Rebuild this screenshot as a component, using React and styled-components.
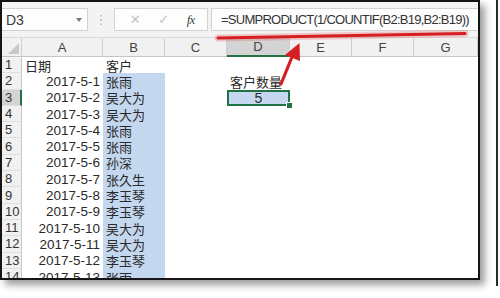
import React from 'react';
import styled, { createGlobalStyle } from 'styled-components';

const GlobalStyle = createGlobalStyle`
  html, body { margin: 0; padding: 0; background: #fff; }
  body { font-family: "Liberation Sans", "Noto Sans CJK SC", sans-serif; }
`;

const rows = [
  ['日期', '客户'],
  ['2017-5-1', '张雨'],
  ['2017-5-2', '吴大为'],
  ['2017-5-3', '吴大为'],
  ['2017-5-4', '张雨'],
  ['2017-5-5', '张雨'],
  ['2017-5-6', '孙深'],
  ['2017-5-7', '张久生'],
  ['2017-5-8', '李玉琴'],
  ['2017-5-9', '李玉琴'],
  ['2017-5-10', '吴大为'],
  ['2017-5-11', '吴大为'],
  ['2017-5-12', '李玉琴'],
  ['2017-5-13', '张雨'],
];

const cols = ['A', 'B', 'C', 'D', 'E', 'F', 'G'];

function App() {
  return (
    <Page>
      <GlobalStyle />
      <Frame>
        <Panel>
          <Toolbar>
            <NameBox>
              D3
              <Caret />
            </NameBox>
            <Dots>⋮</Dots>
            <BtnBox>
              <Glyph>✕</Glyph>
              <Glyph>✓</Glyph>
              <Fx>fx</Fx>
            </BtnBox>
            <FormulaBox>=SUMPRODUCT(1/COUNTIF(B2:B19,B2:B19))</FormulaBox>
          </Toolbar>
          <Sheet>
            <Corner>
              <Tri />
            </Corner>
            {cols.map((c) => (
              <ColHead key={c} $active={c === 'D'}>
                {c}
              </ColHead>
            ))}
            {rows.map((r, i) => {
              const n = i + 1;
              return (
                <React.Fragment key={n}>
                  <RowHead $active={n === 3}>{n}</RowHead>
                  <Cell $right={n > 1} $cjk={n === 1}>
                    {r[0]}
                  </Cell>
                  <Cell $cjk $fill={n > 1}>
                    {r[1]}
                  </Cell>
                  <Cell />
                  {n === 2 && <Cell $cjk>客户数量</Cell>}
                  {n === 3 && (
                    <Selected>
                      5
                      <Handle />
                    </Selected>
                  )}
                  {n !== 2 && n !== 3 && <Cell />}
                  <Cell />
                  <Cell />
                  <Cell />
                </React.Fragment>
              );
            })}
          </Sheet>
        </Panel>
      </Frame>
      <Marks width="500" height="298" viewBox="0 0 500 298">
        <line x1="218" y1="38" x2="465" y2="33.5" stroke="rgba(225,70,70,0.25)" strokeWidth="7" strokeLinecap="round" />
        <line x1="218" y1="38" x2="465" y2="33.5" stroke="#d61f22" strokeWidth="3" strokeLinecap="round" />
        <line x1="281" y1="84" x2="292" y2="57" stroke="#d61f22" strokeWidth="3.2" strokeLinecap="round" />
        <polygon points="299.5,43 300,61 285,55" fill="#d61f22" />
      </Marks>
    </Page>
  );
}

const Page = styled.div`
  position: relative;
  width: 500px;
  height: 298px;
  overflow: hidden;
  background: #fff;
`;

const Frame = styled.div`
  width: 496px;
  height: 286px;
  border-right: 2px solid #2b2b2b;
`;

const Panel = styled.div`
  width: 476px;
  height: 276px;
  border: 2px solid #151515;
  box-shadow: 5px 5px 7px rgba(0, 0, 0, 0.38);
  background: #fff;
  overflow: hidden;
  display: flex;
  flex-direction: column;
`;

const Toolbar = styled.div`
  height: 36px;
  flex: none;
  display: flex;
  align-items: center;
  background: #f3f3f3;
  border-bottom: 1px solid #dadada;
  box-sizing: border-box;
`;

const NameBox = styled.div`
  width: 86px;
  height: 23px;
  box-sizing: border-box;
  background: #fdfdfd;
  border: 1px solid #d2d2d2;
  border-left: none;
  display: flex;
  align-items: center;
  justify-content: space-between;
  padding: 0 5px 0 4px;
  font-size: 14px;
  color: #3a3a3a;
`;

const Caret = styled.span`
  width: 0;
  height: 0;
  border-left: 3.5px solid transparent;
  border-right: 3.5px solid transparent;
  border-top: 4px solid #777;
`;

const Dots = styled.div`
  width: 26px;
  text-align: center;
  color: #b8b8b8;
  font-size: 13px;
  font-family: "DejaVu Sans", sans-serif;
`;

const BtnBox = styled.div`
  width: 94px;
  height: 23px;
  box-sizing: border-box;
  background: #fdfdfd;
  border: 1px solid #d2d2d2;
  display: flex;
  align-items: center;
  justify-content: space-around;
  padding: 0 4px 0 6px;
  margin-right: 3px;
`;

const Glyph = styled.span`
  font-family: "DejaVu Sans", sans-serif;
  font-size: 13px;
  color: #c2c2c2;
`;

const Fx = styled.span`
  font-family: "Liberation Serif", serif;
  font-style: italic;
  font-size: 13px;
  color: #444;
  letter-spacing: -1px;
`;

const FormulaBox = styled.div`
  flex: 1;
  height: 23px;
  box-sizing: border-box;
  background: #fdfdfd;
  border: 1px solid #d2d2d2;
  border-right: none;
  padding-left: 9px;
  display: flex;
  align-items: center;
  font-size: 13px;
  letter-spacing: -0.75px;
  color: #333;
  white-space: nowrap;
`;

const Sheet = styled.div`
  display: grid;
  grid-template-columns: 20px 81px 62px 62px 63px 62px 62px 64px;
  grid-template-rows: 19px;
  grid-auto-rows: 16.3px;
  overflow: hidden;
`;

const Corner = styled.div`
  background: #f1f1f1;
  border-right: 1px solid #d0d0d0;
  border-bottom: 1px solid #c4c4c4;
  position: relative;
`;

const Tri = styled.span`
  position: absolute;
  right: 2px;
  bottom: 2px;
  width: 0;
  height: 0;
  border-left: 11px solid transparent;
  border-bottom: 11px solid #c9c9c9;
`;

const ColHead = styled.div`
  background: ${(p) => (p.$active ? '#d4d4d4' : '#f1f1f1')};
  border-right: 1px solid #d0d0d0;
  border-bottom: ${(p) => (p.$active ? '2px solid #217346' : '1px solid #c4c4c4')};
  display: flex;
  align-items: center;
  justify-content: center;
  font-size: 13px;
  color: #444;
  overflow: hidden;
`;

const RowHead = styled.div`
  background: ${(p) => (p.$active ? '#d4d4d4' : '#f1f1f1')};
  border-right: ${(p) => (p.$active ? '2px solid #217346' : '1px solid #c8c8c8')};
  border-bottom: 1px solid #dedede;
  box-sizing: border-box;
  padding-left: 3px;
  display: flex;
  align-items: center;
  font-size: 13px;
  color: #333;
  overflow: hidden;
`;

const Cell = styled.div`
  background: ${(p) => (p.$fill ? '#c3d7ef' : '#fff')};
  display: flex;
  align-items: center;
  justify-content: ${(p) => (p.$right ? 'flex-end' : 'flex-start')};
  padding: 0 3px;
  font-size: ${(p) => (p.$cjk ? '13px' : '13.5px')};
  color: #2a2a2a;
  white-space: nowrap;
  overflow: visible;
  min-width: 0;
`;

const Selected = styled.div`
  position: relative;
  background: #c6d8f0;
  box-shadow: inset 0 0 0 2px #217346;
  display: flex;
  align-items: center;
  justify-content: center;
  font-size: 14px;
  color: #2a2a2a;
`;

const Handle = styled.span`
  position: absolute;
  right: -3px;
  bottom: -3px;
  width: 5px;
  height: 5px;
  background: #217346;
  border: 1px solid #fff;
`;

const Marks = styled.svg`
  position: absolute;
  left: 0;
  top: 0;
  pointer-events: none;
`;

export default App;
